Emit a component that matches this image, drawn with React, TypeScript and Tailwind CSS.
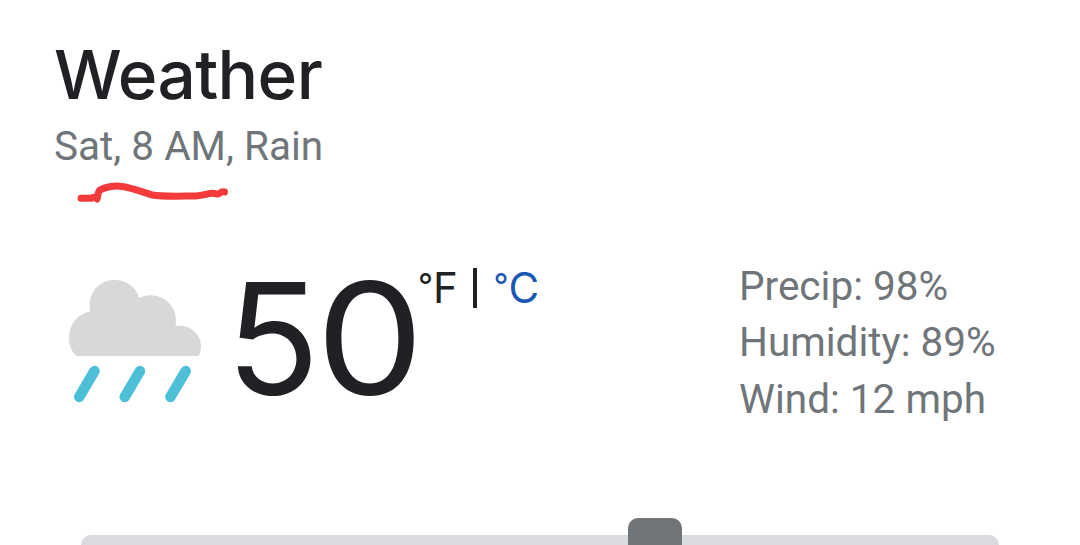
const details = ["Precip: 98%", "Humidity: 89%", "Wind: 12 mph"];

function RainIcon() {
  return (
    <svg className="h-[126px] w-[134px] shrink-0" viewBox="68 279 134 126" aria-hidden="true">
      <path
        d="M76.5 356 C72 352 69 346 69 338.5 C69 324 77.500 314 90 311.500 L89.700 305 C89.700 290.500 101 280 114.500 280 C126 280 136.500 287 139 298 C142 296.300 146 295.200 150.500 295.200 C165 295.200 176 306.500 176 320.500 L175.700 326 C189 324 201 333 201 346 C201 350 200 353.500 198.500 356 Z"
        fill="#d8d8d8"
      />
      <path d="M94.500 371 L79.200 397 M140 371 L124.700 397 M185.700 371 L170.400 397" stroke="#4dbfd6" strokeWidth="10.500" strokeLinecap="round" />
    </svg>
  );
}

export default function App() {
  return (
    <main className="relative flex h-[545px] w-[1080px] flex-col overflow-hidden bg-white font-['Roboto',sans-serif] text-[40.5px] text-[#70757a]">
      <header className="px-[54px] pt-[40px]">
        <h1 className="h-[72px] whitespace-nowrap font-['Inter',sans-serif] text-[67.500px] font-medium leading-[70px] tracking-[-0.6px] text-[#202124]">
          Weather
        </h1>
        <p className="mt-[6px] h-[56px] leading-[56px]">Sat, 8 AM, Rain</p>
        <svg className="absolute left-[70px] top-[175px] h-[35px] w-[170px]" viewBox="0 0 170 35" fill="none" aria-hidden="true">
          <path d="M11 23.300 H21 C24 22 26 22 27 24 C28 22 27 18 30 15 C35 12 44 10.500 50 11.300 C61 12.500 73 17 82 20 C93 22 114 21 126 21 C136 20 141 17 146 18.800 C151 20 149 16 154.500 17" stroke="#f43b3b" strokeWidth="7" strokeLinecap="round" strokeLinejoin="round" />
        </svg>
      </header>
      <section className="mt-[84px] flex h-[170px] items-start pl-[68px]">
        <div className="pt-[21px]">
          <RainIcon />
        </div>
        <div className="ml-[24px] flex h-[170px] w-[192px] font-['Inter',sans-serif] text-[154px] leading-[160px] text-[#202124]">
          <span className="w-[90px] tracking-[-9px]">5</span>
          <span className="origin-left scale-x-[1.11] tracking-[-6px]">0</span>
        </div>
        <div className="flex h-[60px] items-center font-['Inter',sans-serif] text-[42px] leading-[60px] text-[#202124]">
          <span className="mb-[6px] w-[15px] text-[33px] leading-[52px]">°</span>
          <span className="w-[40px]">F</span>
          <span className="h-[40px] w-[3.500px] bg-[#202124]" />
          <span className="mb-[6px] ml-[17px] w-[15px] text-[33px] leading-[52px] text-[#1a56b4]">°</span>
          <span className="text-[#1a56b4]">C</span>
        </div>
        <div className="ml-auto w-[341px] leading-[56.300px]">
          {details.map((line) => (
            <p key={line}>{line}</p>
          ))}
        </div>
      </section>
      <div className="mt-auto flex h-[27px] items-end pl-[81px]">
        <div className="flex h-[10px] w-[918px] items-end rounded-t-[10px] bg-[#dadbdf] pl-[547px]">
          <div className="h-[27px] w-[54px] shrink-0 rounded-t-[10px] bg-[#70757a]" />
        </div>
      </div>
    </main>
  );
}
